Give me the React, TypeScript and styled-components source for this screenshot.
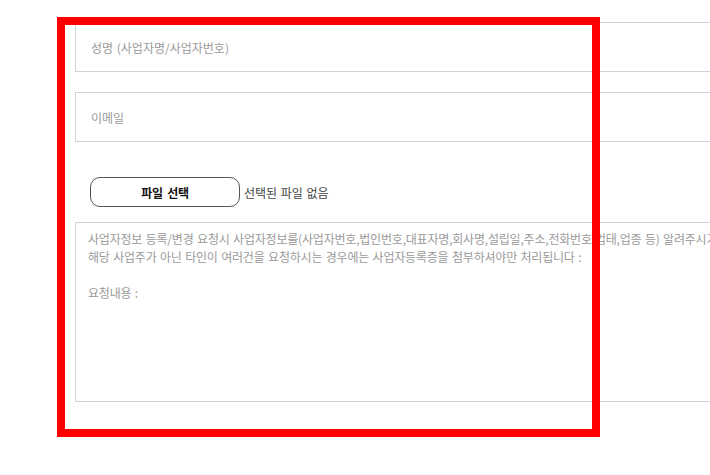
import React from "react";
import styled, { createGlobalStyle } from "styled-components";

const GlobalStyle = createGlobalStyle`
  html, body {
    margin: 0;
    padding: 0;
    background: #fff;
    overflow: hidden;
  }
  body {
    font-family: "Noto Sans CJK KR", "Noto Sans", sans-serif;
  }
`;

const requestGuide =
  "사업자정보 등록/변경 요청시 사업자정보를(사업자번호,법인번호,대표자명,회사명,설립일,주소,전화번호,업태,업종 등) 알려주시기 바랍니다.\n" +
  "해당 사업주가 아닌 타인이 여러건을 요청하시는 경우에는 사업자등록증을 첨부하셔야만 처리됩니다 :\n\n" +
  "요청내용 :";

const App: React.FC = () => {
  return (
    <Page>
      <GlobalStyle />
      <Form>
        <TextInput type="text" placeholder="성명 (사업자명/사업자번호)" />
        <TextInput type="email" placeholder="이메일" />
        <FileRow>
          <FileButton type="button">파일 선택</FileButton>
          <FileName>선택된 파일 없음</FileName>
        </FileRow>
        <Message placeholder={requestGuide} />
      </Form>
      <Highlight />
    </Page>
  );
};

const Page = styled.div`
  position: relative;
  width: 710px;
  height: 475px;
  overflow: hidden;
`;

const Form = styled.form`
  display: flex;
  flex-direction: column;
  width: 900px;
  padding: 22px 0 0 75px;
`;

const TextInput = styled.input`
  box-sizing: border-box;
  height: 50px;
  margin: 0 0 20px;
  padding: 0 15px;
  border: 1px solid #cfd3d8;
  border-radius: 0;
  font-family: "Noto Sans CJK KR", sans-serif;
  font-size: 12px;
  letter-spacing: 0;
  word-spacing: 1px;
  color: #333;
  outline: none;

  &::placeholder {
    color: #9a9a9a;
  }
`;

const FileRow = styled.div`
  display: flex;
  align-items: center;
  gap: 4px;
  margin: 15px 0 15px 15px;
`;

const FileButton = styled.button`
  box-sizing: border-box;
  width: 150px;
  height: 30px;
  padding: 0;
  border: 1px solid #555;
  border-radius: 10px;
  background: #fff;
  font-family: "Noto Sans CJK KR", sans-serif;
  font-size: 12px;
  font-weight: 700;
  letter-spacing: -0.3px;
  word-spacing: 2px;
  color: #111;
  cursor: pointer;
`;

const FileName = styled.span`
  font-size: 12px;
  letter-spacing: 0;
  word-spacing: 1px;
  color: #444;
`;

const Message = styled.textarea`
  box-sizing: border-box;
  height: 180px;
  padding: 7px 12px;
  border: 1px solid #cfd3d8;
  border-radius: 0;
  resize: none;
  font-family: "Noto Sans CJK KR", sans-serif;
  font-size: 12px;
  line-height: 18px;
  letter-spacing: -0.2px;
  word-spacing: 1px;
  color: #333;
  white-space: pre;
  overflow: hidden;
  outline: none;

  &::placeholder {
    color: #9a9a9a;
  }
`;

const Highlight = styled.div`
  position: absolute;
  left: 57px;
  top: 17px;
  width: 543px;
  height: 420px;
  box-sizing: border-box;
  border: 8px solid #ff0000;
  pointer-events: none;
`;

export default App;
